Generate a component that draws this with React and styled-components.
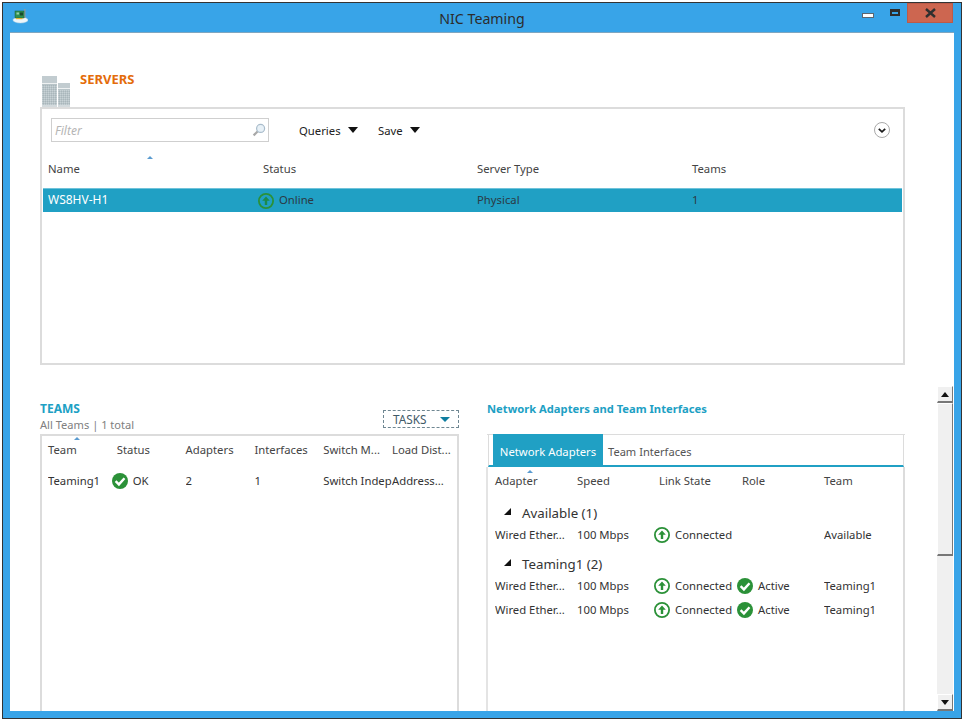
import React from "react";
import styled, { createGlobalStyle } from "styled-components";

const GlobalStyle = createGlobalStyle`
  html, body {
    margin: 0;
    padding: 0;
    background: #fff;
  }
  body {
    font-family: "Noto Sans", "Open Sans", sans-serif;
    font-size: 11.3px;
    color: #333;
  }
  * {
    box-sizing: border-box;
  }
`;

const SERVER_COLS = "215px 214px 215px 1fr";
const TEAM_COLS = "68.8px 68.8px 68.8px 68.8px 68.8px 1fr";
const ADAPTER_COLS = "82px 82px 83px 82px 1fr";

function ArrowUpIcon({ selected }) {
  return (
    <StatusSvg viewBox="0 0 16 16">
      <circle cx="8" cy="8" r="7.1" fill={selected ? "none" : "#fff"} stroke="#2b9138" strokeWidth="1.8" />
      <path d="M8 3.6 L11.8 7.8 H9.2 V12 H6.8 V7.8 H4.2 Z" fill={selected ? "#1c8a4c" : "#2b9138"} />
    </StatusSvg>
  );
}

function CheckIcon() {
  return (
    <StatusSvg viewBox="0 0 16 16">
      <circle cx="8" cy="8" r="8" fill="#2b9138" />
      <path d="M3.6 8.2 L6.9 11.4 L12.5 5.2" fill="none" stroke="#fff" strokeWidth="2.4" />
    </StatusSvg>
  );
}

function AppIcon() {
  return (
    <svg width="16" height="16" viewBox="0 0 16 16">
      <ellipse cx="8.5" cy="11" rx="7.5" ry="3" fill="#eef6fa" stroke="#c4d8e4" strokeWidth="0.5" />
      <rect x="12" y="0" width="1.5" height="9" fill="#8a9a9e" />
      <rect x="3" y="2" width="9" height="7" fill="#2f8f50" stroke="#1f5c36" strokeWidth="0.5" />
      <rect x="4.5" y="3.5" width="2.5" height="2" fill="#9ad0a8" />
      <rect x="8" y="3.5" width="3" height="3" fill="#174a2a" />
      <rect x="4" y="9" width="6.5" height="1.2" fill="#e0b030" />
    </svg>
  );
}

function ServersIcon() {
  return (
    <svg width="28" height="31" viewBox="0 0 28 31">
      <defs>
        <pattern id="dither" width="2" height="2" patternUnits="userSpaceOnUse">
          <rect width="1" height="1" fill="#c8d2d6" />
          <rect x="1" y="1" width="1" height="1" fill="#a9b6bb" />
        </pattern>
      </defs>
      <rect x="0" y="0" width="15" height="31" fill="#b8c4c8" />
      <rect x="0" y="9" width="15" height="20" fill="url(#dither)" />
      <rect x="0" y="0" width="15" height="7" fill="#c2ccd0" />
      <rect x="0" y="7" width="15" height="1" fill="#eef1f2" />
      <rect x="0" y="29" width="15" height="2" fill="#d3dadd" />
      <rect x="16" y="7" width="12" height="24" fill="#b8c4c8" />
      <rect x="16" y="14" width="12" height="15" fill="url(#dither)" />
      <rect x="16" y="7" width="12" height="5" fill="#c2ccd0" />
      <rect x="16" y="12" width="12" height="1" fill="#eef1f2" />
      <rect x="16" y="29" width="12" height="2" fill="#d3dadd" />
    </svg>
  );
}

function SearchIcon() {
  return (
    <svg width="14" height="14" viewBox="0 0 14 14">
      <path d="M6 8 L1.6 12.4" stroke="#a8a8a8" strokeWidth="2.2" />
      <circle cx="8.6" cy="5.4" r="4" fill="#e8f1f7" stroke="#a9bccb" strokeWidth="1.2" />
    </svg>
  );
}

function ChevronCircle() {
  return (
    <svg width="16" height="16" viewBox="0 0 16 16">
      <circle cx="8" cy="8" r="7.5" fill="#fff" stroke="#a9a9a9" />
      <path d="M4.8 6.8 L8 9.8 L11.2 6.8" fill="none" stroke="#1c1c1c" strokeWidth="1.8" />
    </svg>
  );
}

function Status({ selected, check, children }) {
  return (
    <StatusCell>
      {check ? <CheckIcon /> : <ArrowUpIcon selected={selected} />}
      <StatusLabel>{children}</StatusLabel>
    </StatusCell>
  );
}

function AdapterRow({ role, team }) {
  return (
    <TableRow $cols={ADAPTER_COLS} $height={24}>
      <Cell>Wired Ether...</Cell>
      <Cell>100 Mbps</Cell>
      <Status>Connected</Status>
      {role ? <Status check>{role}</Status> : <Cell />}
      <Cell>{team}</Cell>
    </TableRow>
  );
}

export default function App() {
  return (
    <Frame>
      <GlobalStyle />
      <TitleBar>
        <TitleIcon>
          <AppIcon />
        </TitleIcon>
        <Title>NIC Teaming</Title>
        <MinButton />
        <MaxButton />
        <CloseButton>
          <svg width="13" height="10" viewBox="0 0 13 10">
            <path d="M2 1 L11 9 M11 1 L2 9" stroke="#2f2f2f" strokeWidth="2.4" />
          </svg>
        </CloseButton>
      </TitleBar>

      <Content>
        <ServersHead>
          <ServersIcon />
          <ServersTitle>SERVERS</ServersTitle>
        </ServersHead>

        <ServersPanel>
          <Toolbar>
            <FilterBox>
              <FilterText>Filter</FilterText>
              <SearchIcon />
            </FilterBox>
            <MenuButton $width={79}>
              Queries <Caret />
            </MenuButton>
            <MenuButton $width={60}>
              Save <Caret />
            </MenuButton>
            <ExpandButton>
              <ChevronCircle />
            </ExpandButton>
          </Toolbar>

          <ServersHeader $cols={SERVER_COLS} $height={22}>
            <HeadCell>
              Name
              <SortMark $left={99} />
            </HeadCell>
            <HeadCell>Status</HeadCell>
            <HeadCell>Server Type</HeadCell>
            <HeadCell>Teams</HeadCell>
          </ServersHeader>

          <SelectedRow $cols={SERVER_COLS} $height={24}>
            <SelectedName>WS8HV-H1</SelectedName>
            <Status selected>Online</Status>
            <Cell>Physical</Cell>
            <Cell>1</Cell>
          </SelectedRow>
        </ServersPanel>

        <LowerRow>
          <TeamsColumn>
            <TeamsHead>
              <div>
                <TeamsTitle>TEAMS</TeamsTitle>
                <SubTitle>All Teams | 1 total</SubTitle>
              </div>
              <TasksButton>
                TASKS
                <TasksCaret />
              </TasksButton>
            </TeamsHead>
            <TeamsPanel>
              <TableRow $cols={TEAM_COLS} $height={28}>
                <HeadCell>
                  Team
                  <SortMark $left={26} />
                </HeadCell>
                <HeadCell>Status</HeadCell>
                <HeadCell>Adapters</HeadCell>
                <HeadCell>Interfaces</HeadCell>
                <HeadCell>Switch M...</HeadCell>
                <HeadCell>Load Dist...</HeadCell>
              </TableRow>
              <TeamRow $cols={TEAM_COLS} $height={24}>
                <Cell>Teaming1</Cell>
                <Status check>OK</Status>
                <Cell>2</Cell>
                <Cell>1</Cell>
                <Cell>Switch Indep</Cell>
                <Cell>Address...</Cell>
              </TeamRow>
            </TeamsPanel>
          </TeamsColumn>

          <AdaptersColumn>
            <AdaptersHead>
              <SectionTitle>Network Adapters and Team Interfaces</SectionTitle>
            </AdaptersHead>
            <AdaptersPanel>
              <TabBar>
                <ActiveTab>Network Adapters</ActiveTab>
                <Tab>Team Interfaces</Tab>
              </TabBar>
              <AdapterBody>
                <TableRow $cols={ADAPTER_COLS} $height={20}>
                  <HeadCell>
                    Adapter
                    <SortMark $left={32} $top={-3} />
                  </HeadCell>
                  <HeadCell>Speed</HeadCell>
                  <HeadCell>Link State</HeadCell>
                  <HeadCell>Role</HeadCell>
                  <HeadCell>Team</HeadCell>
                </TableRow>
                <GroupRow $first>
                  <GroupMark />
                  Available (1)
                </GroupRow>
                <AdapterRow team="Available" />
                <GroupRow>
                  <GroupMark />
                  Teaming1 (2)
                </GroupRow>
                <AdapterRow role="Active" team="Teaming1" />
                <AdapterRow role="Active" team="Teaming1" />
              </AdapterBody>
            </AdaptersPanel>
          </AdaptersColumn>

          <ScrollBar>
            <ScrollButton>
              <ScrollArrow $up />
            </ScrollButton>
            <ScrollThumb />
            <ScrollTrack />
            <ScrollButton>
              <ScrollArrow />
            </ScrollButton>
          </ScrollBar>
        </LowerRow>
      </Content>
    </Frame>
  );
}

const Frame = styled.div`
  display: flex;
  flex-direction: column;
  width: 960px;
  height: 717px;
  margin: 2px 0 0 2px;
  padding: 0 7px 7px 7px;
  background: #38a4e8;
  border: 1px solid #333;
  overflow: hidden;
`;

const TitleBar = styled.div`
  position: relative;
  flex: 0 0 29px;
  display: flex;
  align-items: center;
  justify-content: center;
`;

const TitleIcon = styled.div`
  position: absolute;
  left: 2px;
  top: 6px;
  display: flex;
`;

const Title = styled.div`
  font-size: 14.2px;
  color: #2c2c2c;
  margin-top: 1px;
`;

const MinButton = styled.div`
  position: absolute;
  left: 852px;
  top: 10px;
  width: 12px;
  height: 5px;
  background: #fff;
  border: 1px solid #5c6670;
`;

const MaxButton = styled.div`
  position: absolute;
  left: 880px;
  top: 6px;
  width: 10px;
  height: 7px;
  border: 2px solid #2d2d2d;
  border-top-width: 3px;
`;

const CloseButton = styled.div`
  position: absolute;
  left: 897px;
  top: 0;
  width: 46px;
  height: 20px;
  display: flex;
  align-items: center;
  justify-content: center;
  background: #cd6650;
  border: 1px solid #bd5a48;
`;

const Content = styled.div`
  flex: 1;
  min-height: 0;
  display: flex;
  flex-direction: column;
  background: #fff;
  border-top: 1px solid #7fa6c0;
  padding-left: 30px;
  overflow: hidden;
`;

const ServersHead = styled.div`
  flex: 0 0 74px;
  display: flex;
  align-items: flex-end;
  padding-left: 2px;
`;

const ServersTitle = styled.div`
  align-self: flex-start;
  margin: 37px 0 0 10px;
  font-size: 13px;
  font-weight: 700;
  line-height: 18px;
  color: #e46c0a;
`;

const ServersPanel = styled.div`
  width: 865px;
  height: 258px;
  flex: none;
  border: 2px solid #dcdcdc;
`;

const Toolbar = styled.div`
  display: flex;
  align-items: center;
  height: 24px;
  margin: 9px 0 0 9px;
`;

const FilterBox = styled.div`
  display: flex;
  align-items: center;
  justify-content: space-between;
  width: 218px;
  height: 24px;
  margin-right: 30px;
  padding: 0 2px 0 3px;
  border: 1px solid #cfcfcf;
`;

const FilterText = styled.span`
  font-size: 12px;
  font-style: italic;
  color: #b5b5b5;
`;

const MenuButton = styled.div`
  display: flex;
  align-items: center;
  gap: 7px;
  width: ${(p) => p.$width}px;
  color: #222;
`;

const Caret = styled.span`
  width: 0;
  height: 0;
  border-left: 5px solid transparent;
  border-right: 5px solid transparent;
  border-top: 6px solid #111;
`;

const ExpandButton = styled.div`
  display: flex;
  margin: 0 13px 0 auto;
`;

const TableRow = styled.div`
  display: grid;
  grid-template-columns: ${(p) => p.$cols};
  align-items: center;
  height: ${(p) => p.$height}px;
`;

const ServersHeader = styled(TableRow)`
  margin: 16px 0 0 6px;
`;

const SelectedRow = styled(TableRow)`
  margin: 8px 1px 0 1px;
  padding-left: 5px;
  background: #20a0c4;
  border-top: 1px solid #6fc3da;
  color: #2b3a44;
`;

const Cell = styled.div`
  white-space: nowrap;
  overflow: hidden;
  padding-bottom: 2px;
`;

const HeadCell = styled.div`
  position: relative;
  white-space: nowrap;
  padding-bottom: 2px;
  color: #444;
`;

const SelectedName = styled(Cell)`
  font-size: 12px;
  color: #fff;
`;

const SortMark = styled.span`
  position: absolute;
  left: ${(p) => p.$left}px;
  top: ${(p) => (p.$top === undefined ? -5 : p.$top)}px;
  width: 0;
  height: 0;
  border-left: 3px solid transparent;
  border-right: 3px solid transparent;
  border-bottom: 3px solid #5b9bd0;
`;

const StatusCell = styled.div`
  display: flex;
  align-items: center;
  gap: 5px;
  margin-left: -5px;
  white-space: nowrap;
`;

const StatusLabel = styled.span`
  padding-bottom: 2px;
`;

const StatusSvg = styled.svg`
  width: 16px;
  height: 16px;
  flex: none;
`;

const LowerRow = styled.div`
  flex: 1;
  min-height: 0;
  display: flex;
  margin-top: 21px;
`;

const TeamsColumn = styled.div`
  width: 419px;
  display: flex;
  flex-direction: column;
`;

const TeamsHead = styled.div`
  flex: 0 0 48px;
  display: flex;
  justify-content: space-between;
  align-items: flex-end;
  padding-bottom: 1px;
`;

const SectionTitle = styled.div`
  font-size: 11.2px;
  font-weight: 700;
  line-height: 16px;
  color: #20a0c4;
`;

const TeamsTitle = styled(SectionTitle)`
  font-size: 12px;
  line-height: 14px;
`;

const SubTitle = styled.div`
  font-size: 11.1px;
  line-height: 17px;
  color: #808080;
`;

const TasksButton = styled.div`
  display: flex;
  align-items: center;
  justify-content: space-between;
  width: 76px;
  height: 18px;
  margin-bottom: 5px;
  padding: 0 8px 0 9px;
  border: 1px dashed #6f8792;
  font-size: 11.8px;
  color: #3f5a68;
`;

const TasksCaret = styled.span`
  width: 0;
  height: 0;
  border-left: 5px solid transparent;
  border-right: 5px solid transparent;
  border-top: 5px solid #0f7ea0;
`;

const TeamsPanel = styled.div`
  flex: 1;
  padding-left: 6px;
  border: 2px solid #dcdcdc;
  border-bottom: 0;
`;

const TeamRow = styled(TableRow)`
  margin-top: 5px;
`;

const AdaptersColumn = styled.div`
  width: 418px;
  margin-left: 28px;
  display: flex;
  flex-direction: column;
`;

const AdaptersHead = styled.div`
  flex: 0 0 48px;
  padding-top: 15px;
`;

const AdaptersPanel = styled.div`
  flex: 1;
  display: flex;
  flex-direction: column;
  border-top: 1px solid #dcdcdc;
`;

const TabBar = styled.div`
  display: flex;
  align-items: flex-end;
  height: 32px;
  margin: 0 1px;
  padding-left: 4px;
  border-bottom: 2px solid #20a0c4;
  border-left: 1px solid #dcdcdc;
  border-right: 1px solid #dcdcdc;
`;

const ActiveTab = styled.div`
  width: 110px;
  height: 31px;
  margin-top: -1px;
  padding-top: 3px;
  display: flex;
  align-items: center;
  justify-content: center;
  background: #20a0c4;
  color: #fff;
`;

const Tab = styled.div`
  height: 29px;
  display: flex;
  align-items: center;
  padding: 1px 0 0 5px;
  font-size: 11.1px;
  color: #555;
`;

const AdapterBody = styled.div`
  flex: 1;
  padding: 4px 0 0 7px;
  border-left: 2px solid #e4e4e4;
  border-right: 2px solid #dcdcdc;
  margin-left: -1px;
`;

const GroupRow = styled.div`
  display: flex;
  align-items: center;
  height: 20px;
  margin-top: ${(p) => (p.$first ? 12 : 7)}px;
  padding-left: 27px;
  font-size: 13.3px;
  color: #333;
  position: relative;
`;

const GroupMark = styled.span`
  position: absolute;
  left: 9px;
  top: 5px;
  width: 0;
  height: 0;
  border-left: 7px solid transparent;
  border-bottom: 7px solid #111;
`;

const ScrollBar = styled.div`
  width: 16px;
  margin-left: 32px;
  display: flex;
  flex-direction: column;
  background: #f0f0f0;
`;

const ScrollButton = styled.div`
  flex: 0 0 17px;
  display: flex;
  align-items: center;
  justify-content: center;
  background: #f0f0f0;
  border: 1px solid #fff;
  border-right-color: #777;
  border-bottom: 2px solid #777;
`;

const ScrollArrow = styled.span`
  width: 0;
  height: 0;
  border-left: 4px solid transparent;
  border-right: 4px solid transparent;
  ${(p) => (p.$up ? "border-bottom: 5px solid #111;" : "border-top: 5px solid #111;")}
`;

const ScrollThumb = styled.div`
  flex: 0 0 153px;
  background: #f0f0f0;
  border: 1px solid #fff;
  border-right-color: #777;
  border-bottom: 2px solid #777;
`;

const ScrollTrack = styled.div`
  flex: 1;
`;
